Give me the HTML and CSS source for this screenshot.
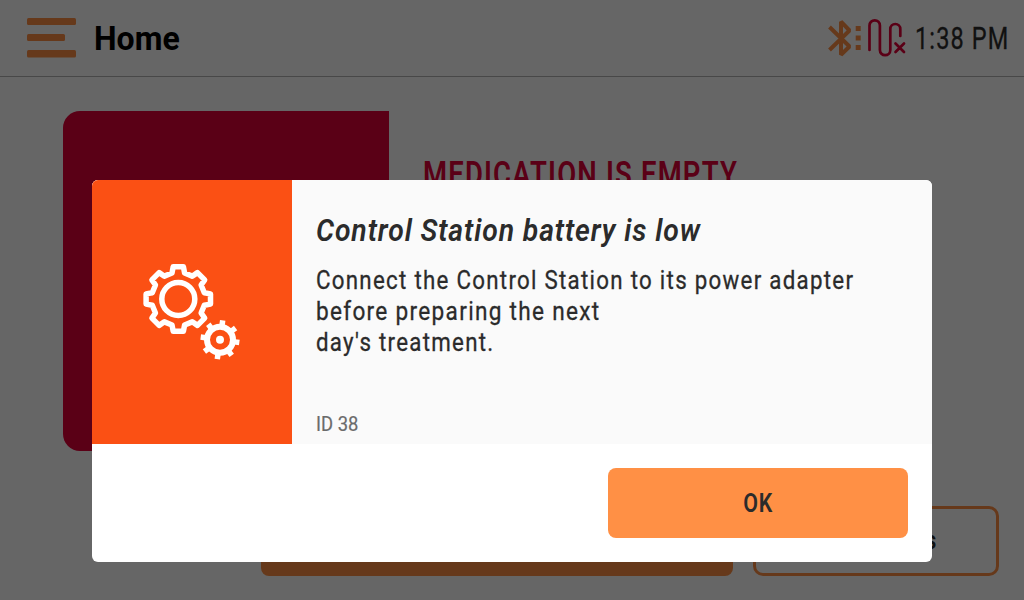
FILE: index.html
```html
<!DOCTYPE html>
<html lang="en">
<head>
<meta charset="utf-8">
<title>Home</title>
<link rel="stylesheet" href="styles.css">
</head>
<body>
<div class="screen">
  <header class="topbar">
    <svg class="menu" width="49" height="40" viewBox="0 0 49 40"><rect y="0" width="49" height="7" rx="1.5"/><rect y="16" width="38" height="7" rx="1.5"/><rect y="32" width="49" height="7.6" rx="1.5"/></svg>
    <h1 class="page-title"><span class="fit">Home</span></h1>
    <svg class="status" width="78" height="40" viewBox="828 18 78 40">
      <g class="bluetooth"><path d="M829.5 27L849.500 46.500L841 54.800V21.700L849.500 30.500L829.500 50"/><path class="dots" d="M855.700 26h5v5h-5zM855.700 35.500h5v5h-5zM855.700 45h5v5h-5z"/></g>
      <path class="tube" d="M869.500 50V25.500a5.200 5.200 0 0 1 10.400 0V50a5.200 5.200 0 0 0 10.400 0V29a5 5 0 0 1 10 0V36M895.500 43.500l8.500 8.500M904 43.500l-8.500 8.500"/>
    </svg>
    <time class="clock"><span class="fit">1:38 PM</span></time>
  </header>
  <main class="content">
    <div class="card"></div>
    <h2 class="alert"><span class="fit">MEDICATION IS EMPTY</span></h2>
  </main>
  <footer class="actions">
    <div class="primary"></div>
    <div class="secondary"><span class="fit">s</span></div>
  </footer>
</div>
<div class="overlay">
  <section class="dialog">
    <div class="dialog-body">
      <div class="badge">
        <svg width="100" height="100" viewBox="142 262 100 100">
          <g id="gear" class="gear"></g>
          <circle class="ring" cx="178.300" cy="299" r="16.500"/>
          <g id="cog" class="cog"><circle class="ring" cx="220" cy="339.800" r="13"/><circle class="dot" cx="220" cy="339.800" r="4"/></g>
        </svg>
      </div>
      <div class="message">
        <h3 class="title"><span class="fit">Control Station battery is low</span></h3>
        <p class="text"><span class="fit">Connect the Control Station to its power adapter</span><br><span class="fit wide">before preparing the next</span><br><span class="fit">day's treatment.</span></p>
        <p class="code"><span class="fit">ID 38</span></p>
      </div>
    </div>
    <div class="dialog-actions"><button class="ok"><span class="fit">OK</span></button></div>
  </section>
</div>
<script src="icons.js"></script>
</body>
</html>
```
FILE: styles.css
```css
* { box-sizing: border-box; }
body { margin: 0; width: 1024px; height: 600px; overflow: hidden; font-family: Roboto, "Liberation Sans", sans-serif; color: #2b2b2b; }
h1, h2, h3, p { margin: 0; }
.fit { display: inline-block; white-space: nowrap; transform-origin: left center; }
.screen { height: 600px; background: #fff; display: flex; flex-direction: column; }
.topbar { height: 77px; flex: none; border-bottom: 1px solid #b4b4b4; display: flex; align-items: flex-start; padding: 18px 0 0 27px; }
.menu { fill: #ff9045; }
.page-title { font-size: 33px; line-height: 41px; font-weight: 700; color: #000; margin-left: 18px; width: 100px; }
.page-title .fit { transform: scaleX(.97); }
.status { margin-left: 634px; overflow: visible; }
.bluetooth { fill: none; stroke: #ff9045; stroke-width: 4; stroke-linejoin: bevel; }
.dots { fill: #ff9045; stroke: none; }
.tube { fill: none; stroke: #e10037; stroke-width: 2.700; stroke-linecap: round; }
.clock { font-size: 31px; line-height: 41px; margin-left: 9px; width: 100px; -webkit-text-stroke: .3px; }
.clock .fit { transform: scaleX(.758); letter-spacing: 1.500px; }
.content { flex: 1; display: flex; padding: 34px 0 0 63px; }
.card { width: 326px; height: 340px; background: #e10037; border-radius: 17px 0 0 17px; }
.alert { margin: 43px 0 0 34px; width: 400px; font-size: 35px; line-height: 42px; font-weight: 600; color: #e10037; }
.alert .fit { transform: scaleX(.785); letter-spacing: 1.500px; }
.actions { height: 94px; display: flex; gap: 20px; padding-left: 261px; }
.primary { width: 472px; height: 70px; background: #ff9045; border-radius: 8px; }
.secondary { width: 246px; height: 70px; border: 3px solid #ff9045; border-radius: 10px; padding: 16px 0 0 169px; font-size: 26px; line-height: 30px; font-weight: 600; }
.secondary .fit { transform: scaleX(.85); }
.overlay { position: absolute; inset: 0; background: rgba(0,0,0,.6); padding: 180px 92px 0; }
.dialog { width: 840px; height: 382px; background: #fff; border-radius: 6px; overflow: hidden; }
.dialog-body { height: 264px; display: flex; background: #fafafa; }
.badge { width: 200px; background: #fb5014; padding: 82px 0 0 50px; }
.gear path, .ring { fill: none; stroke: #fff; stroke-width: 5.500; stroke-linejoin: round; }
.cog .ring { stroke-width: 6; }
.cog path { fill: none; stroke: #fff; stroke-width: 5.500; }
.dot { fill: #fff; }
.message { padding: 30px 0 0 24px; width: 640px; }
.title { font-size: 32px; line-height: 40px; font-style: italic; font-weight: 600; }
.title .fit { transform: scaleX(.887); letter-spacing: 1px; }
.text { margin-top: 15px; font-size: 26px; line-height: 31px; height: 124px; -webkit-text-stroke: .3px; }
.text .fit { transform: scaleX(.857); letter-spacing: 1.500px; vertical-align: top; }
.text .wide { transform: scaleX(.869); }
.code { margin-top: 23px; font-size: 20px; line-height: 24px; color: #6b6b6b; -webkit-text-stroke: .2px; }
.code .fit { transform: scaleX(.92); }
.dialog-actions { display: flex; justify-content: flex-end; padding: 24px; }
.ok { width: 300px; height: 70px; border: 0; padding: 0; border-radius: 8px; background: #ff9045; color: #2b2b2b; font: 600 26px/70px Roboto, sans-serif; }
.ok .fit { transform: scaleX(.82); transform-origin: center; letter-spacing: 1px; }
```
FILE: icons.js
```js
const NS = "http://www.w3.org/2000/svg";
function addPath(id, d, transform) {
  const p = document.createElementNS(NS, "path");
  p.setAttribute("d", d);
  if (transform) p.setAttribute("transform", transform);
  document.getElementById(id).appendChild(p);
}
// Eight-toothed outline: two base points and two tip points per tooth.
let points = [];
for (let i = 0; i < 8; i++) {
  const a = i * Math.PI / 4;
  for (const [x, y] of [[-6.3, -26], [-5.1, -32.2], [5.1, -32.2], [6.3, -26]]) {
    points.push((178.3 + x * Math.cos(a) - y * Math.sin(a)).toFixed(2) + " " + (299 + x * Math.sin(a) + y * Math.cos(a)).toFixed(2));
  }
  addPath("cog", "M220 325V320.300", `rotate(${i * 45 + 8} 220 339.800)`);
}
addPath("gear", "M" + points.join("L") + "Z");
```
